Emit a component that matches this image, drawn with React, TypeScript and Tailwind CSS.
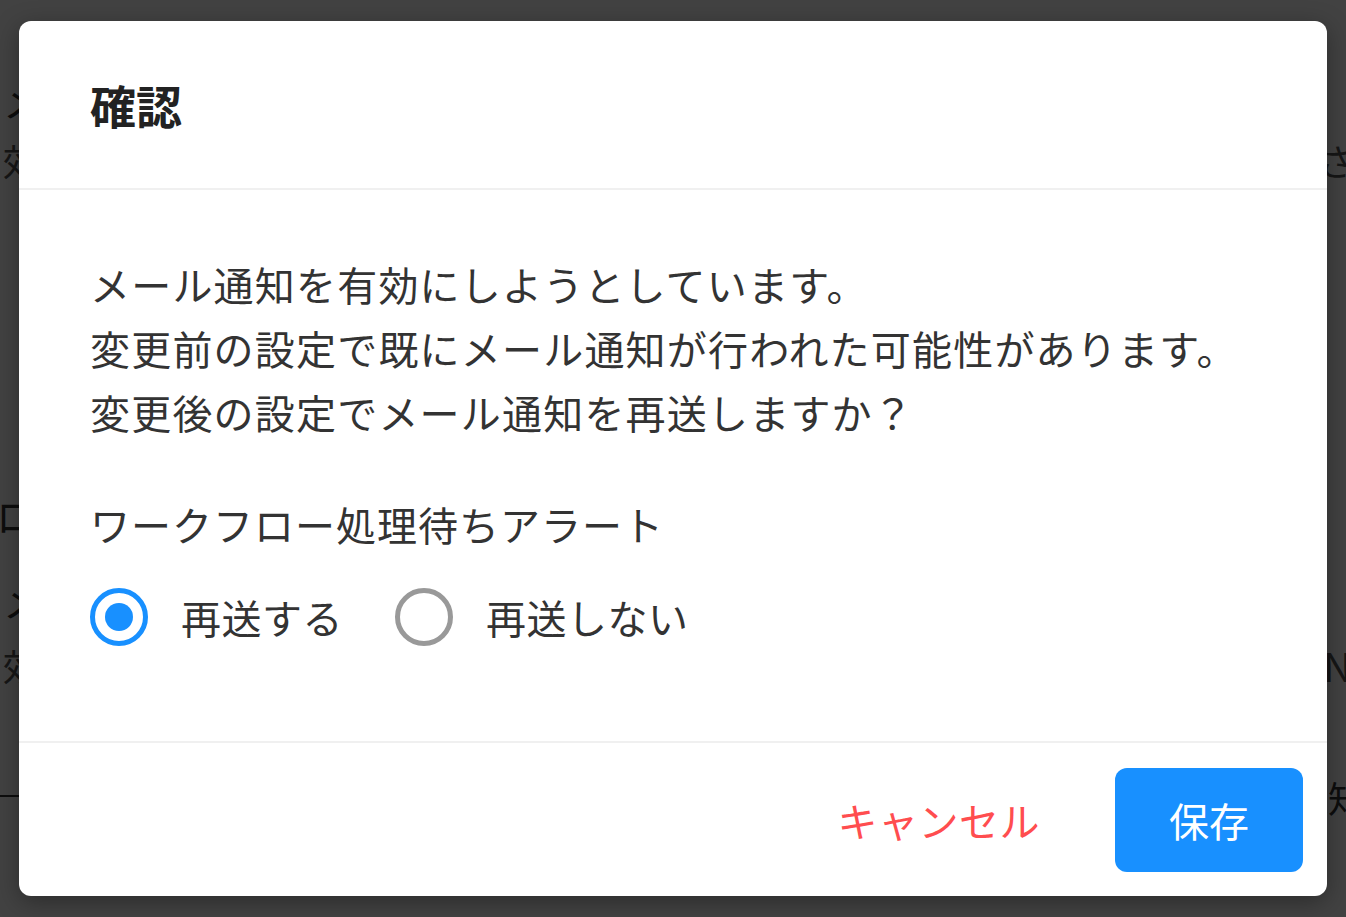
import { useState } from "react";

const FONT = { fontFamily: '"Noto Sans CJK JP", "Noto Sans", sans-serif' };

// page that sits behind the modal backdrop
function SettingsPage() {
  return (
    <div className="w-[1400px] text-[#333]">
      <div className="h-[70px]" />
      <div className="flex h-[60px] items-center justify-between pl-[3px] text-[40px]">
        <span>メール通知</span>
        <span />
      </div>
      <div className="flex h-[60px] items-center justify-between pl-[3px] text-[36px] text-[#555]">
        <span>効率的に通知を受け取るための設定</span>
        <span className="pr-[10px]">さい</span>
      </div>
      <div className="h-[295px]" />
      <div className="flex h-[60px] items-center text-[40px]">
        <span className="-ml-[4px]">ロー設定</span>
      </div>
      <div className="h-[25px]" />
      <div className="flex h-[60px] items-center justify-between pl-[3px] text-[40px]">
        <span>メール通知</span>
        <span />
      </div>
      <div className="flex h-[70px] items-center justify-between pl-[3px] text-[36px] text-[#555]">
        <span>効率化</span>
        <span className="pr-[48px] text-[40px]">ON</span>
      </div>
      <div className="flex h-[97px] items-end justify-between text-[36px]">
        <span className="w-[300px] border-b-2 border-[#333]" />
        <span className="-mb-[28px] leading-[56px]">通知先</span>
      </div>
    </div>
  );
}

function Radio({
  checked,
  label,
  onClick,
}: {
  checked: boolean;
  label: string;
  onClick: () => void;
}) {
  return (
    <label className="flex cursor-pointer items-center gap-[33px]" onClick={onClick}>
      <span
        className={`flex h-[58px] w-[58px] items-center justify-center rounded-full border-[5px] bg-white ${
          checked ? "border-[#1890ff]" : "border-[#999]"
        }`}
      >
        {checked && <span className="h-[28px] w-[28px] rounded-full bg-[#1890ff]" />}
      </span>
      <span className="text-[40px] leading-[64px] tracking-[0.5px] text-[#333]">{label}</span>
    </label>
  );
}

export default function App() {
  const [resend, setResend] = useState(true);

  return (
    <div className="relative h-[917px] w-full overflow-hidden bg-white" style={FONT}>
      <SettingsPage />

      {/* Backdrop */}
      <div className="absolute inset-0 bg-black/[0.74]" />

      {/* Modal */}
      <div className="absolute left-[19px] top-[21px] w-[1308px] rounded-[12px] bg-white shadow-[0_6px_24px_rgba(0,0,0,0.35)]">
        <div className="flex h-[169px] items-center border-b-2 border-[#f0f0f0] pl-[71px]">
          <h2 className="text-[46px] font-bold text-[#222]">確認</h2>
        </div>

        <div className="px-[71px] pb-[92px] pt-[62px]">
          <p className="text-[40px] leading-[64px] tracking-[1.2px] text-[#333]">
            メール通知を有効にしようとしています。
            <br />
            変更前の設定で既にメール通知が行われた可能性があります。
            <br />
            変更後の設定でメール通知を再送しますか？
          </p>

          <div className="mt-[48px] text-[40px] leading-[64px] tracking-[1px] text-[#333]">
            ワークフロー処理待ちアラート
          </div>

          <div className="mt-[29px] flex items-center gap-[52px]">
            <Radio checked={resend} label="再送する" onClick={() => setResend(true)} />
            <Radio checked={!resend} label="再送しない" onClick={() => setResend(false)} />
          </div>
        </div>

        <div className="flex items-center justify-end gap-[75px] border-t-2 border-[#f0f0f0] pb-[24px] pl-[24px] pr-[24px] pt-[25px]">
          <button className="text-[40px] leading-[64px] tracking-[0.5px] text-[#ff4d4f]">キャンセル</button>
          <button className="h-[104px] w-[188px] rounded-[12px] bg-[#1890ff] text-[40px] text-white">
            保存
          </button>
        </div>
      </div>
    </div>
  );
}
